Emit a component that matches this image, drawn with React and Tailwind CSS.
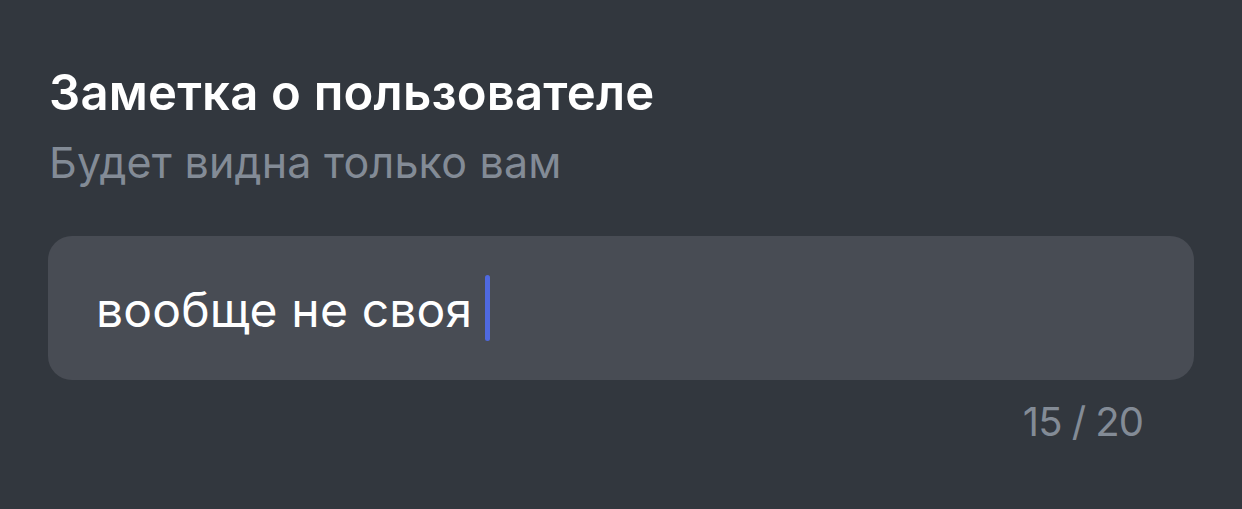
export default function App() {
  return (
    <div className="w-[1242px] h-[509px] bg-[#32373e] px-[48px] pt-[64px] font-['Inter','Roboto',sans-serif]">
      <h1 className="text-[49px] leading-[58px] font-semibold tracking-[0.2px] text-white ml-[1px]">Заметка о пользователе</h1>
      <p className="text-[43px] leading-[50px] tracking-[0.2px] text-[#838b96] mt-[15px] ml-[1px]">Будет видна только вам</p>

      <div className="mt-[49px] h-[144px] w-[1146px] rounded-[24px] bg-[#484c54] flex items-center pl-[48px]">
        <span className="text-[48px] leading-[58px] tracking-[0.15px] pt-[3px] text-white">вообще не своя</span>
        <span className="ml-[13px] w-[5px] h-[66px] rounded-full bg-[#4f69e0]" />
      </div>

      <div className="flex justify-end pr-[51px] mt-[18px]">
        <span className="text-[40px] leading-[48px] tracking-[-1px] text-[#838b96]">15 / 20</span>
      </div>
    </div>
  );
}
